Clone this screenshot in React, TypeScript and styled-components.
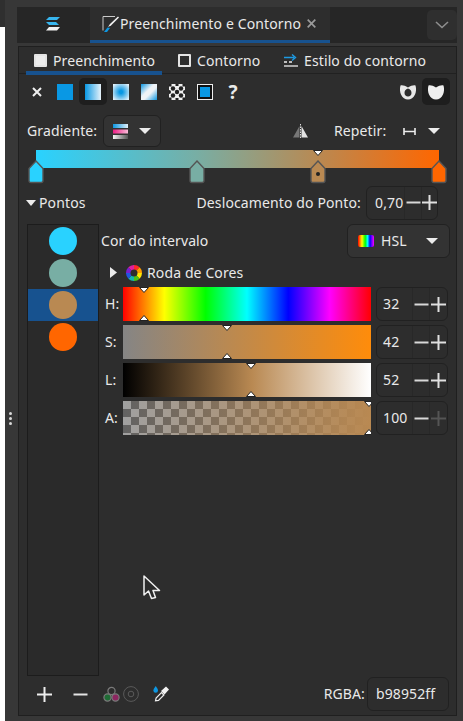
import React from 'react';
import styled, { createGlobalStyle } from 'styled-components';

const Global = createGlobalStyle`
  html, body { margin: 0; padding: 0; background: #363636; }
  * { box-sizing: border-box; }
  svg { display: block; }
`;

const Page = styled.div`
  position: relative;
  display: flex;
  width: 463px;
  height: 721px;
  overflow: hidden;
  background: #373737;
  color: #e9e9e9;
  font-family: "Noto Sans", "Open Sans", sans-serif;
  font-size: 14px;
  line-height: 18px;
  letter-spacing: 0.12px;
`;
const WindowEdge = styled.div`
  width: 5px;
  padding-top: 27px;
  background: #2f2f2f;
  &::after { content: ""; display: block; height: 100%; background: #fff; }
`;
const Gutter = styled.div`
  width: 12px;
  padding-top: 412px;
  display: flex;
  flex-direction: column;
  align-items: center;
  gap: 2px;
`;
const GripDot = styled.i`
  display: block;
  width: 3px;
  height: 3px;
  margin-left: -1px;
  border-radius: 50%;
  background: #d8d8d8;
`;
const Dock = styled.div`
  width: 440px;
  padding-top: 7px;
  display: flex;
  flex-direction: column;
`;
const TabBar = styled.div`
  display: flex;
  height: 36px;
  background: #262626;
`;
const LogoTab = styled.div`
  width: 73px;
  display: flex;
  align-items: center;
  justify-content: center;
  padding-right: 1px;
  padding-bottom: 3px;
`;
const DocTab = styled.div`
  width: 240px;
  display: flex;
  align-items: center;
  gap: 0;
  padding: 0 0 0 12px;
  background: #2d2d2d;
  border-bottom: 3px solid #17528f;
`;
const TabClose = styled.span`
  margin-left: 6px;
`;
const TabMenu = styled.div`
  width: 30px;
  height: 30px;
  margin: 3px 0 0 97px;
  display: flex;
  align-items: center;
  justify-content: center;
  background: #2f2f2f;
  border-radius: 5px;
`;
const Frame = styled.div`
  margin-top: 3px;
  margin-left: 1px;
  height: 670px;
  border: 1px solid #1f1f1f;
  background: #2d2d2d;
  display: flex;
  flex-direction: column;
`;
const SubTabs = styled.div`
  display: flex;
  height: 27px;
  flex: none;
  padding-left: 7px;
  border-bottom: 1px solid #212121;
`;
const SubTab = styled.div<{ $w: number; $active?: boolean }>`
  width: ${p => p.$w}px;
  height: 28px;
  flex: none;
  display: flex;
  align-items: center;
  gap: 6px;
  white-space: nowrap;
  padding: ${p => (p.$active ? '3px 0 0 8px' : '3px 0 4px 16px')};
  border-bottom: ${p => (p.$active ? '4px solid #17528f' : 'none')};
`;
const CheckBox = styled.span<{ $on?: boolean }>`
  width: 13px;
  height: 13px;
  flex: none;
  border: 2px solid #e4e4e4;
  border-radius: 1px;
  background: ${p => (p.$on ? '#ececec' : 'transparent')};
`;
const Toolbar = styled.div`
  display: flex;
  height: 27px;
  flex: none;
  margin-top: 4px;
  padding: 0 6px 0 4px;
`;
const ToolBtn = styled.div<{ $active?: boolean }>`
  width: 28px;
  height: 27px;
  flex: none;
  display: flex;
  align-items: center;
  justify-content: center;
  border-radius: 5px;
  background: ${p => (p.$active ? '#1e1e1e' : 'transparent')};
`;
const ToolGap = styled.div`
  flex: 1;
`;
const Question = styled.span`
  font-size: 19px;
  font-weight: 700;
  line-height: 20px;
`;
const GradientRow = styled.div`
  display: flex;
  align-items: center;
  height: 32px;
  flex: none;
  margin-top: 10px;
  padding-left: 8px;
`;
const FixedLabel = styled.span<{ $w: number; $ml?: number }>`
  width: ${p => p.$w}px;
  margin-left: ${p => p.$ml ?? 0}px;
  flex: none;
  white-space: nowrap;
`;
const Combo = styled.div<{ $w: number; $h: number; $pad: number; $gap: number }>`
  width: ${p => p.$w}px;
  height: ${p => p.$h}px;
  flex: none;
  display: flex;
  align-items: center;
  gap: ${p => p.$gap}px;
  padding-left: ${p => p.$pad}px;
  background: #333;
  border: 1px solid #212121;
  border-radius: 6px;
`;
const Spaced = styled.span<{ $ml: number }>`
  display: inline-flex;
  flex: none;
  margin-left: ${p => p.$ml}px;
`;
const GradientTrack = styled.div`
  position: relative;
  width: 403px;
  height: 33px;
  flex: none;
  margin: 3px 0 0 17px;
`;
const GradientFill = styled.div`
  height: 18px;
  background: linear-gradient(90deg, #29d2ff 0%, #78aea4 40%, #b98952 70%, #ff6600 100%);
`;
const Stop = styled.div<{ $x: number }>`
  position: absolute;
  top: 10px;
  left: ${p => p.$x - 8}px;
  width: 16px;
  height: 24px;
`;
const StopMark = styled.div<{ $x: number }>`
  position: absolute;
  top: 0;
  left: ${p => p.$x - 5}px;
  width: 10px;
  height: 6px;
`;
const PointsRow = styled.div`
  display: flex;
  align-items: center;
  height: 33px;
  flex: none;
  margin-top: 3px;
  padding: 0 18px 0 7px;
`;
const PointsTitle = styled.span`
  margin-left: 3px;
`;
const OffsetLabel = styled.span`
  margin-left: auto;
  margin-right: 5px;
`;
const Spin = styled.div<{ $plusW: number }>`
  width: 72px;
  height: 34px;
  flex: none;
  display: grid;
  grid-template-columns: 1fr 17px ${p => p.$plusW}px;
  align-items: stretch;
  border: 1px solid #212121;
  border-radius: 6px;
`;
const SpinValue = styled.span<{ $pad: number }>`
  align-self: center;
  padding-left: ${p => p.$pad}px;
  font-size: 14px;
`;
const SpinCell = styled.span`
  display: flex;
  align-items: center;
  justify-content: center;
  border-left: 1px solid #282828;
`;
const MainRow = styled.div`
  display: flex;
  flex: none;
  margin-top: 5px;
  padding-left: 8px;
`;
const StopList = styled.div`
  width: 72px;
  height: 452px;
  flex: none;
  border: 1px solid #1c1c1c;
  background: #2a2a2a;
`;
const StopItem = styled.div<{ $selected?: boolean }>`
  height: 32px;
  display: flex;
  align-items: center;
  justify-content: center;
  background: ${p => (p.$selected ? '#17528f' : 'transparent')};
`;
const StopDot = styled.span<{ $color: string }>`
  width: 28px;
  height: 28px;
  border-radius: 50%;
  background: ${p => p.$color};
`;
const Editor = styled.div`
  width: 349px;
  margin-left: 2px;
  flex: none;
  display: flex;
  flex-direction: column;
`;
const IntervalRow = styled.div`
  height: 34px;
  flex: none;
  display: flex;
  align-items: center;
  justify-content: space-between;
`;
const WheelRow = styled.div`
  height: 29px;
  flex: none;
  display: flex;
  align-items: center;
  padding-left: 9px;
`;
const WheelLabel = styled.span`
  margin-left: 5px;
`;
const SliderRow = styled.div`
  height: 34px;
  flex: none;
  margin-bottom: 4px;
  display: flex;
  align-items: center;
`;
const SliderLabel = styled.span`
  width: 22px;
  padding-left: 4px;
  flex: none;
`;
const SliderTrack = styled.div<{ $bg: string }>`
  position: relative;
  width: 248px;
  height: 34px;
  flex: none;
  margin-right: 5px;
  overflow: hidden;
  background: ${p => p.$bg};
  background-size: ${p => (p.$bg.includes('conic') ? '100% 100%, 16px 16px' : 'auto')};
`;
const Thumb = styled.div<{ $x: number; $bottom?: boolean }>`
  position: absolute;
  left: ${p => p.$x - 5}px;
  ${p => (p.$bottom ? 'bottom: 0;' : 'top: 0;')}
  width: 10px;
  height: 6px;
`;
const BottomRow = styled.div`
  height: 34px;
  flex: none;
  margin-top: 1px;
  display: flex;
  align-items: center;
`;
const RgbaLabel = styled.span`
  margin-left: auto;
  margin-right: 2px;
`;
const RgbaEntry = styled.div`
  width: 82px;
  height: 34px;
  flex: none;
  margin-right: 7px;
  display: flex;
  align-items: center;
  padding-left: 8px;
  border: 1px solid #212121;
  border-radius: 6px;
`;
const Cursor = styled.div`
  position: absolute;
  left: 143px;
  top: 575px;
  width: 18px;
  height: 26px;
`;

const Arrow = ({ w = 12 }: { w?: number }) => (
  <svg width={w} height="6" viewBox="0 0 12 6" preserveAspectRatio="none"><path d="M0 0h12L6 6z" fill="#ececec" /></svg>
);
const Minus = ({ c = '#d8d8d8' }: { c?: string }) => (
  <svg width="15" height="15" viewBox="0 0 15 15"><rect x="0.5" y="6.500" width="14" height="2" fill={c} /></svg>
);
const Plus = ({ c = '#e0e0e0' }: { c?: string }) => (
  <svg width="15" height="15" viewBox="0 0 15 15"><path d="M0 6.500h15v2H0zM6.500 0h2v15h-2z" fill={c} /></svg>
);
const ThumbShape = ({ up }: { up?: boolean }) => (
  <svg width="10" height="6" viewBox="0 0 10 6">
    <path d={up ? 'M5 .5L9.500 5.500h-9z' : 'M.5 .5h9L5 5.500z'} fill="#fff" stroke="#222" strokeWidth="1" />
  </svg>
);
const StopShape = ({ fill, dot }: { fill: string; dot?: boolean }) => (
  <svg width="16" height="24" viewBox="0 0 16 24">
    <path d="M8 1L15 8.500V20.500Q15 22.500 13 22.500H3Q1 22.500 1 20.500V8.500z" fill={fill} stroke="#555" strokeWidth="1.400" />
    {dot && <circle cx="8" cy="14" r="2" fill="#222" />}
  </svg>
);
const Logo = () => (
  <svg width="16" height="14" viewBox="0 0 16 14">
    <path d="M4 0H15L12 3H1z" fill="#37b5ee" />
    <path d="M1 5H11L14 8H4z" fill="#37b5ee" />
    <path d="M4 10H15L12 13.500H1z" fill="#f0f0f0" />
  </svg>
);
const PenSquare = () => (
  <svg width="18" height="18" viewBox="0 0 18 18" style={{ flex: 'none' }}>
    <path d="M1 15.500V1.500H13" fill="none" stroke="#c9c9c9" strokeWidth="1" />
    <path d="M16 1.500L8 9l-2 3 3-1.500 8-8z" fill="#f2f2f2" />
    <path d="M5.500 12.500L2 17h3l3-4z" fill="#0d97e2" />
  </svg>
);
const CloseGlyph = () => (
  <svg width="9" height="9" viewBox="0 0 9 9"><path d="M.7 .7l7.600 7.600M8.300 .7L.7 8.300" stroke="#9a9a9a" strokeWidth="1.700" /></svg>
);
const Chevron = () => (
  <svg width="14" height="8" viewBox="0 0 14 8"><path d="M1 1l6 5.500L13 1" fill="none" stroke="#8e8e8e" strokeWidth="1.600" /></svg>
);
const StrokeStyleIcon = () => (
  <svg width="14" height="13" viewBox="0 0 14 13" style={{ flex: 'none' }}>
    <path d="M0 3.500h10M8 .5l3.500 3-3.500 3" fill="none" stroke="#1d9ae2" strokeWidth="1.400" />
    <path d="M0 8h3M5 8h3" stroke="#eee" strokeWidth="1.300" />
    <path d="M0 12h14" stroke="#eee" strokeWidth="1.300" />
  </svg>
);
const Cross = () => (
  <svg width="10" height="10" viewBox="0 0 10 10"><path d="M1 1l8 8M9 1l-8 8" stroke="#efefef" strokeWidth="2" /></svg>
);
const Flat = () => <svg width="16" height="16"><rect width="16" height="16" fill="#0998e4" /></svg>;
const LinearPaint = () => (
  <svg width="16" height="16">
    <defs><linearGradient id="lp"><stop offset="0" stopColor="#0998e4" /><stop offset="1" stopColor="#e6f2fa" /></linearGradient></defs>
    <rect width="16" height="16" fill="url(#lp)" />
  </svg>
);
const RadialPaint = () => (
  <svg width="16" height="16">
    <defs><radialGradient id="rp" r="0.65"><stop offset="0.15" stopColor="#0998e4" /><stop offset="1" stopColor="#e6f2fa" /></radialGradient></defs>
    <rect width="16" height="16" fill="url(#rp)" />
  </svg>
);
const MeshPaint = () => (
  <svg width="16" height="16">
    <defs><linearGradient id="mp" x1="0" y1="0" x2="1" y2="1">
      <stop offset="0" stopColor="#0d97e2" /><stop offset="0.42" stopColor="#eef3f7" /><stop offset="0.58" stopColor="#eef3f7" /><stop offset="1" stopColor="#0d97e2" />
    </linearGradient></defs>
    <rect width="16" height="16" fill="url(#mp)" />
  </svg>
);
const PatternPaint = () => (
  <svg width="16" height="16">
    <rect width="16" height="16" fill="#efefef" />
    <g fill="#222">
      <rect x="0" y="0" width="2.500" height="2.500" /><rect x="6.500" y="0" width="3" height="2" /><rect x="13.500" y="0" width="2.500" height="2.500" />
      <circle cx="4" cy="4.500" r="2.200" /><circle cx="12" cy="4.500" r="2.200" />
      <circle cx="0" cy="8" r="2" /><circle cx="8" cy="8" r="2.200" /><circle cx="16" cy="8" r="2" />
      <circle cx="4" cy="11.500" r="2.200" /><circle cx="12" cy="11.500" r="2.200" />
      <rect x="0" y="13.500" width="2.500" height="2.500" /><rect x="6.500" y="14" width="3" height="2" /><rect x="13.500" y="13.500" width="2.500" height="2.500" />
    </g>
  </svg>
);
const SwatchPaint = () => (
  <svg width="16" height="16">
    <rect x="0" y="0" width="16" height="16" fill="#eee" />
    <rect x="1" y="1" width="14" height="14" fill="#111" />
    <rect x="3" y="3" width="10" height="10" fill="#0998e4" />
  </svg>
);
const heart = 'M0.5 1.500C3 1 5 2 8 3.500C11 2 13 1 15.500 1.500C16.500 5 16 8 15 10.500C13.500 14 11 15.500 8 15.500C5 15.500 2.500 14 1 10.500C0 8 -0.500 5 0.5 1.500z';
const EvenOdd = () => (
  <svg width="16" height="16" viewBox="0 0 16 16">
    <path fillRule="evenodd" fill="#e8e8e8" d={`${heart}M8 4.500C5.500 5 4.500 7 4.500 9C4.500 11 6 12.500 8 12.500S11.500 11 11.500 9C11.500 7 10.500 5 8 4.500z`} />
  </svg>
);
const NonZero = () => (
  <svg width="16" height="16" viewBox="0 0 16 16"><path fill="#efefef" d={heart} /></svg>
);
const GradientGlyph = () => (
  <svg width="15" height="15" viewBox="0 0 15 15">
    <defs>
      <linearGradient id="g1"><stop offset="0" stopColor="#0d97e2" /><stop offset="1" stopColor="#dff0fa" /></linearGradient>
      <linearGradient id="g2"><stop offset="0" stopColor="#ee1d85" /><stop offset="1" stopColor="#f9bcd9" /></linearGradient>
      <linearGradient id="g3"><stop offset="0" stopColor="#f5f5f5" /><stop offset="1" stopColor="#555" /></linearGradient>
    </defs>
    <rect width="15" height="4" fill="url(#g1)" />
    <rect y="5.500" width="15" height="4" fill="url(#g2)" />
    <rect y="11" width="15" height="4" fill="url(#g3)" />
  </svg>
);
const FlipGlyph = () => (
  <svg width="15" height="15" viewBox="0 0 15 15">
    <path d="M6.500 2L0 13.500h6.500z" fill="#777" />
    <path d="M8.500 2L15 13.500H8.500z" fill="#e2e2e2" />
    <path d="M7.500 0v15" stroke="#ddd" strokeDasharray="1.500 1" />
  </svg>
);
const RepeatGlyph = () => (
  <svg width="13" height="7" viewBox="0 0 13 7"><path d="M1 0v7M12 0v7M1 3.500h11" stroke="#ececec" strokeWidth="1.600" /></svg>
);
const Triangle = () => (
  <svg width="7" height="11" viewBox="0 0 7 11"><path d="M0 0l7 5.500L0 11z" fill="#ececec" /></svg>
);
const Wheel = () => (
  <svg width="16" height="16" viewBox="0 0 16 16">
    {['#ff2a2a', '#ff9d00', '#ffe600', '#4cc417', '#12b8b0', '#2255e0', '#7a1fd0', '#e01f9d'].map((c, i) => (
      <path key={c} d="M8 8L8 0A8 8 0 0 1 13.660 2.340z" fill={c} transform={`rotate(${i * 45} 8 8)`} />
    ))}
    <circle cx="8" cy="8" r="3.500" fill="#2d2d2d" />
  </svg>
);
const Spectrum = () => (
  <svg width="16" height="12">
    <defs><linearGradient id="sp">
      <stop offset="0" stopColor="#f00" /><stop offset=".25" stopColor="#ff0" /><stop offset=".45" stopColor="#0f0" /><stop offset=".6" stopColor="#0ff" /><stop offset=".75" stopColor="#00f" /><stop offset="1" stopColor="#f0f" />
    </linearGradient></defs>
    <rect width="16" height="12" rx="2" fill="url(#sp)" />
  </svg>
);
const Channels = () => (
  <svg width="17" height="16" viewBox="0 0 17 16">
    <circle cx="8.500" cy="5" r="3.600" fill="none" stroke="#7a7a7a" strokeWidth="1.200" />
    <circle cx="4.500" cy="11.500" r="3.600" fill="#1f6b35" stroke="#7a7a7a" strokeWidth="1.200" />
    <circle cx="12.500" cy="11.500" r="3.600" fill="#8c2660" stroke="#7a7a7a" strokeWidth="1.200" />
  </svg>
);
const Target = () => (
  <svg width="16" height="16" viewBox="0 0 16 16">
    <circle cx="8" cy="8" r="7.400" fill="none" stroke="#5a5a5a" />
    <circle cx="8" cy="8" r="2.800" fill="none" stroke="#5a5a5a" />
  </svg>
);
const Dropper = () => (
  <svg width="16" height="16" viewBox="0 0 16 16">
    <path d="M2.700 0Q5 3 5 4.500a2.300 2.300 0 0 1-4.600 0Q.4 3 2.700 0z" fill="#0d97e2" />
    <path d="M2.500 14.800l.6-2.800 5.400-5.400 2.400 2.400-5.400 5.400z" fill="#2d2d2d" stroke="#eee" strokeWidth="1.200" />
    <path d="M8 5l3.500 3.500L16 3.500 13 .5z" fill="#f2f2f2" />
  </svg>
);
const Pointer = () => (
  <svg width="18" height="26" viewBox="0 0 18 26">
    <path d="M1 1V20L5.500 16 8.500 23.500 12.500 22.500 10 15.500H16.500z" fill="#2b2b2b" stroke="#f0f0f0" strokeWidth="1.500" strokeLinejoin="round" />
  </svg>
);

const stops = [
  { x: 0, c: '#29d2ff' },
  { x: 161, c: '#78aea4' },
  { x: 282, c: '#b98952', dot: true },
  { x: 403, c: '#ff6600' },
];
const dots = ['#29d2ff', '#78aea4', '#b98952', '#ff6600'];
const checker = 'conic-gradient(#626262 25%, #a0a0a0 0 50%, #626262 0 75%, #a0a0a0 0)';
const sliders = [
  { l: 'H:', v: '32', x: 21, bg: 'linear-gradient(90deg,#f00 0%,#ff0 16.66%,#0f0 33.33%,#0ff 50%,#00f 66.66%,#f0f 83.33%,#f00 100%)' },
  { l: 'S:', v: '42', x: 104, bg: 'linear-gradient(90deg,#858585 0%,#b98952 42%,#ff8c0a 100%)' },
  { l: 'L:', v: '52', x: 128, bg: 'linear-gradient(90deg,#000 0%,#b98952 52%,#fff 100%)' },
  { l: 'A:', v: '100', x: 246, bg: `linear-gradient(90deg,rgba(185,137,82,0),#b98952), ${checker}`, dim: true },
];

export default function App() {
  return (
    <Page>
      <Global />
      <WindowEdge />
      <Gutter><GripDot /><GripDot /><GripDot /></Gutter>
      <Dock>
        <TabBar>
          <LogoTab><Logo /></LogoTab>
          <DocTab>
            <PenSquare />
            <span>Preenchimento e Contorno</span>
            <TabClose><CloseGlyph /></TabClose>
          </DocTab>
          <TabMenu><Chevron /></TabMenu>
        </TabBar>
        <Frame>
          <SubTabs>
            <SubTab $w={136} $active><CheckBox $on />Preenchimento</SubTab>
            <SubTab $w={106}><CheckBox />Contorno</SubTab>
            <SubTab $w={170}><StrokeStyleIcon />Estilo do contorno</SubTab>
          </SubTabs>
          <Toolbar>
            <ToolBtn><Cross /></ToolBtn>
            <ToolBtn><Flat /></ToolBtn>
            <ToolBtn $active><LinearPaint /></ToolBtn>
            <ToolBtn><RadialPaint /></ToolBtn>
            <ToolBtn><MeshPaint /></ToolBtn>
            <ToolBtn><PatternPaint /></ToolBtn>
            <ToolBtn><SwatchPaint /></ToolBtn>
            <ToolBtn><Question>?</Question></ToolBtn>
            <ToolGap />
            <ToolBtn><EvenOdd /></ToolBtn>
            <ToolBtn $active><NonZero /></ToolBtn>
          </Toolbar>
          <GradientRow>
            <FixedLabel $w={76}>Gradiente:</FixedLabel>
            <Combo $w={58} $h={32} $pad={9} $gap={11}><GradientGlyph /><Arrow /></Combo>
            <Spaced $ml={132}><FlipGlyph /></Spaced>
            <FixedLabel $w={54} $ml={26}>Repetir:</FixedLabel>
            <Spaced $ml={15}><RepeatGlyph /></Spaced>
            <Spaced $ml={12}><Arrow /></Spaced>
          </GradientRow>
          <GradientTrack>
            <GradientFill />
            <StopMark $x={282}><ThumbShape /></StopMark>
            {stops.map(s => (
              <Stop key={s.x} $x={s.x}><StopShape fill={s.c} dot={s.dot} /></Stop>
            ))}
          </GradientTrack>
          <PointsRow>
            <Arrow w={10} />
            <PointsTitle>Pontos</PointsTitle>
            <OffsetLabel>Deslocamento do Ponto:</OffsetLabel>
            <Spin $plusW={16}>
              <SpinValue $pad={8}>0,70</SpinValue>
              <SpinCell><Minus /></SpinCell>
              <SpinCell><Plus /></SpinCell>
            </Spin>
          </PointsRow>
          <MainRow>
            <StopList>
              {dots.map((c, i) => (
                <StopItem key={c} $selected={i === 2}><StopDot $color={c} /></StopItem>
              ))}
            </StopList>
            <Editor>
              <IntervalRow>
                <span>Cor do intervalo</span>
                <Combo $w={103} $h={34} $pad={10} $gap={7}><Spectrum /><span>HSL</span><Spaced $ml={12}><Arrow /></Spaced></Combo>
              </IntervalRow>
              <WheelRow>
                <Triangle />
                <Spaced $ml={9}><Wheel /></Spaced>
                <WheelLabel>Roda de Cores</WheelLabel>
              </WheelRow>
              {sliders.map(s => (
                <SliderRow key={s.l}>
                  <SliderLabel>{s.l}</SliderLabel>
                  <SliderTrack $bg={s.bg}>
                    <Thumb $x={s.x}><ThumbShape /></Thumb>
                    <Thumb $x={s.x} $bottom><ThumbShape up /></Thumb>
                  </SliderTrack>
                  <Spin $plusW={18}>
                    <SpinValue $pad={6}>{s.v}</SpinValue>
                    <SpinCell><Minus /></SpinCell>
                    <SpinCell><Plus c={s.dim ? '#555' : undefined} /></SpinCell>
                  </Spin>
                </SliderRow>
              ))}
            </Editor>
          </MainRow>
          <BottomRow>
            <Spaced $ml={18}><Plus c="#eee" /></Spaced>
            <Spaced $ml={21}><Minus c="#e4e4e4" /></Spaced>
            <Spaced $ml={15}><Channels /></Spaced>
            <Spaced $ml={3}><Target /></Spaced>
            <Spaced $ml={14}><Dropper /></Spaced>
            <RgbaLabel>RGBA:</RgbaLabel>
            <RgbaEntry>b98952ff</RgbaEntry>
          </BottomRow>
        </Frame>
      </Dock>
      <Cursor><Pointer /></Cursor>
    </Page>
  );
}
